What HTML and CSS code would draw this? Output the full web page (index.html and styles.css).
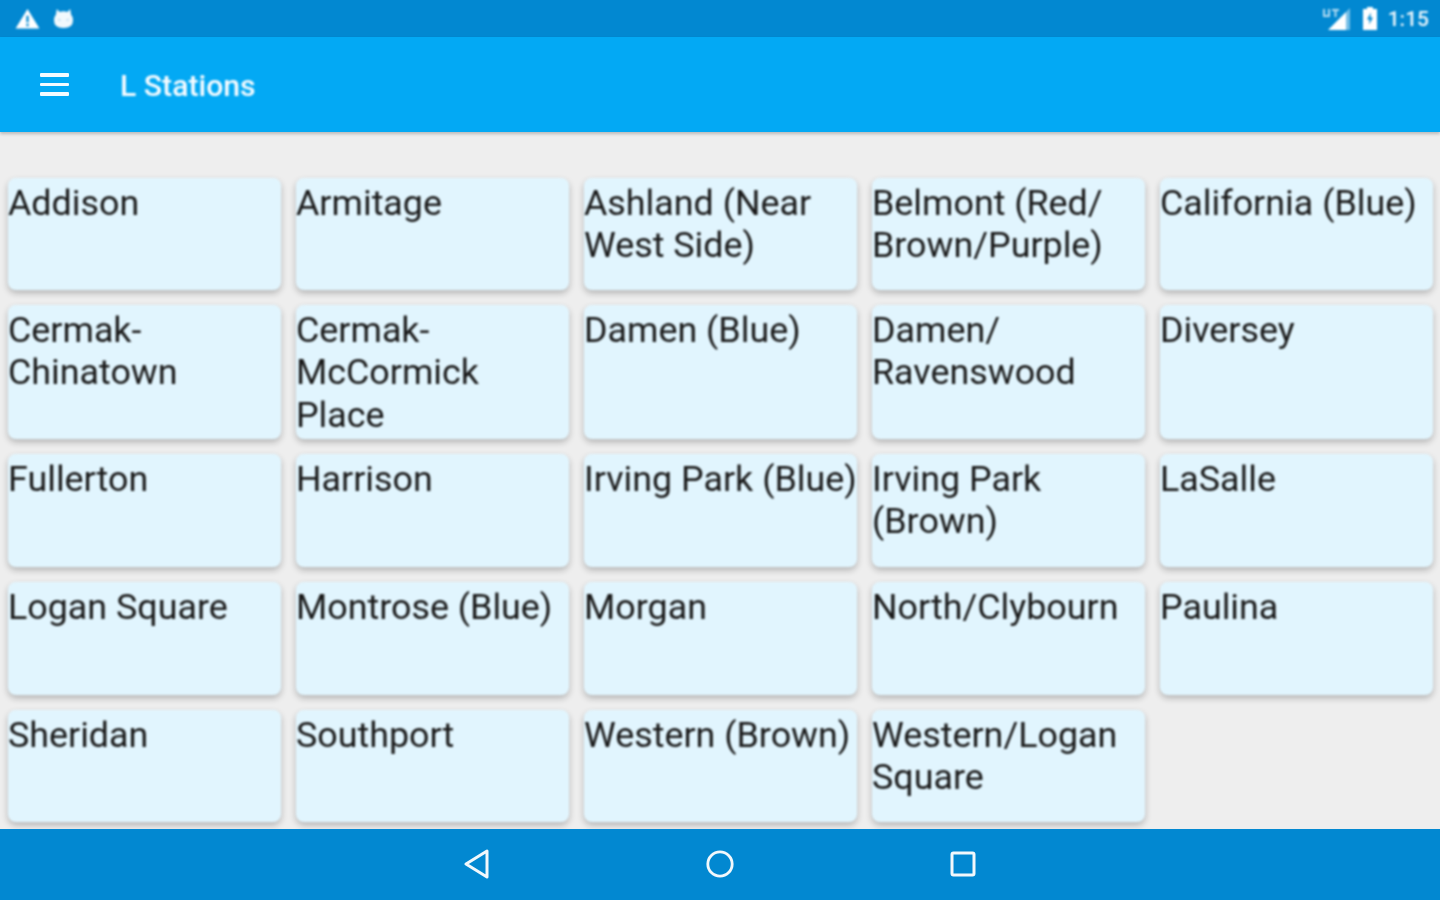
FILE: index.html
```html
<!DOCTYPE html>
<html lang="en">
<head>
<meta charset="utf-8">
<title>L Stations</title>
<link rel="stylesheet" href="styles.css">
</head>
<body>
<div class="screen">
  <header class="status">
    <div class="status-left">
      <svg class="ic-warn" viewBox="0 0 26 22"><path fill="#fff" d="M13 1 25.5 21.5H.5Z"/><path fill="#0288d1" d="M11.8 8h2.4v7h-2.4zM11.8 16.5h2.4v2.5h-2.4z"/></svg>
      <svg class="ic-bot" viewBox="0 0 22 22"><path fill="#fff" d="M4 1l3 3.2Q11 2.6 15 4.2L18 1l1 6Q21 9 21 12.5 21 21 11 21T1 12.5Q1 9 3 7Z" opacity=".95"/><path fill="#bfe0f3" d="M5 11l4 1.5-3 1.5zM17 11l-4 1.500 3 1.500z"/></svg>
    </div>
    <div class="status-right">
      <svg class="ic-signal" viewBox="0 0 30 24"><path fill="#fff" fill-opacity=".45" d="M28 1v22h-4V5z"/><path fill="#fff" d="M24 5v18H6z"/><path fill="#fff" fill-opacity=".7" d="M1 2h2v6h3V2h2v8H1zM10 2h7v2h-2.500v6h-2V4H10z"/></svg>
      <svg class="ic-batt" viewBox="0 0 16 23"><path fill="#fff" d="M5 0h6v2h4v21H1V2h4z"/><path fill="#0288d1" d="M8.800 5.500 5 12.500h2.500l-.3 5L11 10.500H8.500z"/></svg>
      <span class="clock">1:15</span>
    </div>
  </header>
  <div class="appbar">
    <div class="menu"><span></span><span></span><span></span></div>
    <h1 class="title">L Stations</h1>
  </div>
  <main class="content">
    <div class="grid">
      <div class="card">Addison</div>
      <div class="card">Armitage</div>
      <div class="card">Ashland (Near West Side)</div>
      <div class="card">Belmont (Red/ Brown/Purple)</div>
      <div class="card">California (Blue)</div>
      <div class="card">Cermak-Chinatown</div>
      <div class="card">Cermak-McCormick Place</div>
      <div class="card">Damen (Blue)</div>
      <div class="card">Damen/ Ravenswood</div>
      <div class="card">Diversey</div>
      <div class="card">Fullerton</div>
      <div class="card">Harrison</div>
      <div class="card">Irving Park (Blue)</div>
      <div class="card">Irving Park (Brown)</div>
      <div class="card">LaSalle</div>
      <div class="card">Logan Square</div>
      <div class="card">Montrose (Blue)</div>
      <div class="card">Morgan</div>
      <div class="card">North/Clybourn</div>
      <div class="card">Paulina</div>
      <div class="card">Sheridan</div>
      <div class="card">Southport</div>
      <div class="card">Western (Brown)</div>
      <div class="card">Western/Logan Square</div>
    </div>
  </main>
  <nav class="navbar">
    <svg class="nav-ic" viewBox="0 0 28 32"><path fill="none" stroke="#f2f8fc" stroke-width="3" stroke-linejoin="round" d="M24 3v26L3 16Z"/></svg>
    <svg class="nav-ic" viewBox="0 0 32 32"><circle cx="16" cy="16" r="13" fill="none" stroke="#f2f8fc" stroke-width="3"/></svg>
    <svg class="nav-ic" viewBox="0 0 28 32"><rect x="3" y="5" width="22" height="22" rx="1.500" fill="none" stroke="#f2f8fc" stroke-width="3"/></svg>
  </nav>
</div>
</body>
</html>
```

FILE: styles.css
```css
* { box-sizing: border-box; }
html, body { margin: 0; height: 100%; }
body { font-family: Roboto, "Liberation Sans", sans-serif; background: #eeeeee; }

.screen {
  width: 1440px;
  height: 900px;
  display: flex;
  flex-direction: column;
  overflow: hidden;
}

.status {
  height: 37px;
  flex: none;
  background: #0288d1;
  display: flex;
  align-items: center;
  justify-content: space-between;
  padding: 0 11px 0 15px;
}
.status-left, .status-right { display: flex; align-items: center; filter: blur(0.8px); }
.ic-warn { width: 25px; height: 21px; }
.ic-bot { width: 21px; height: 21px; margin-left: 13px; }
.ic-signal { width: 30px; height: 24px; }
.ic-batt { width: 16px; height: 23px; margin-left: 10px; }
.clock { color: #f0f8fc; font-size: 21px; font-weight: 500; margin-left: 10px; }

.appbar {
  height: 95px;
  flex: none;
  background: #03a9f4;
  display: flex;
  align-items: center;
  padding-left: 40px;
  box-shadow: 0 2px 3px rgba(0, 0, 0, .22);
  position: relative;
  z-index: 1;
}
.menu { width: 29px; display: flex; flex-direction: column; gap: 6px; filter: blur(0.6px); }
.menu span { height: 3.500px; background: #f4fbff; border-radius: 1px; }
.title { margin: 3px 0 0 51px; color: #f8fcff; font-size: 30.200px; font-weight: 500; line-height: 1; filter: blur(0.8px); }

.content { flex: 1; min-height: 0; overflow: hidden; padding: 46px 7px 0 8px; }
.grid {
  display: grid;
  grid-template-columns: repeat(5, 1fr);
  grid-template-rows: 112px 134px 113px 113px 112px;
  gap: 15px;
}
.card {
  background: #e1f5fe;
  border-radius: 8px;
  box-shadow: 0 3px 6px rgba(0, 0, 0, .25);
  color: #1a1a1a;
  font-size: 35.850px;
  line-height: 42.600px;
  padding-top: 3.600px;
  filter: blur(0.8px);
}

.navbar {
  height: 71px;
  flex: none;
  background: #0288d1;
  display: flex;
  justify-content: center;
  align-items: center;
  gap: 213px;
  padding-bottom: 1px;
  position: relative;
}
.nav-ic { width: 30px; height: 32px; filter: blur(0.6px); }
```
